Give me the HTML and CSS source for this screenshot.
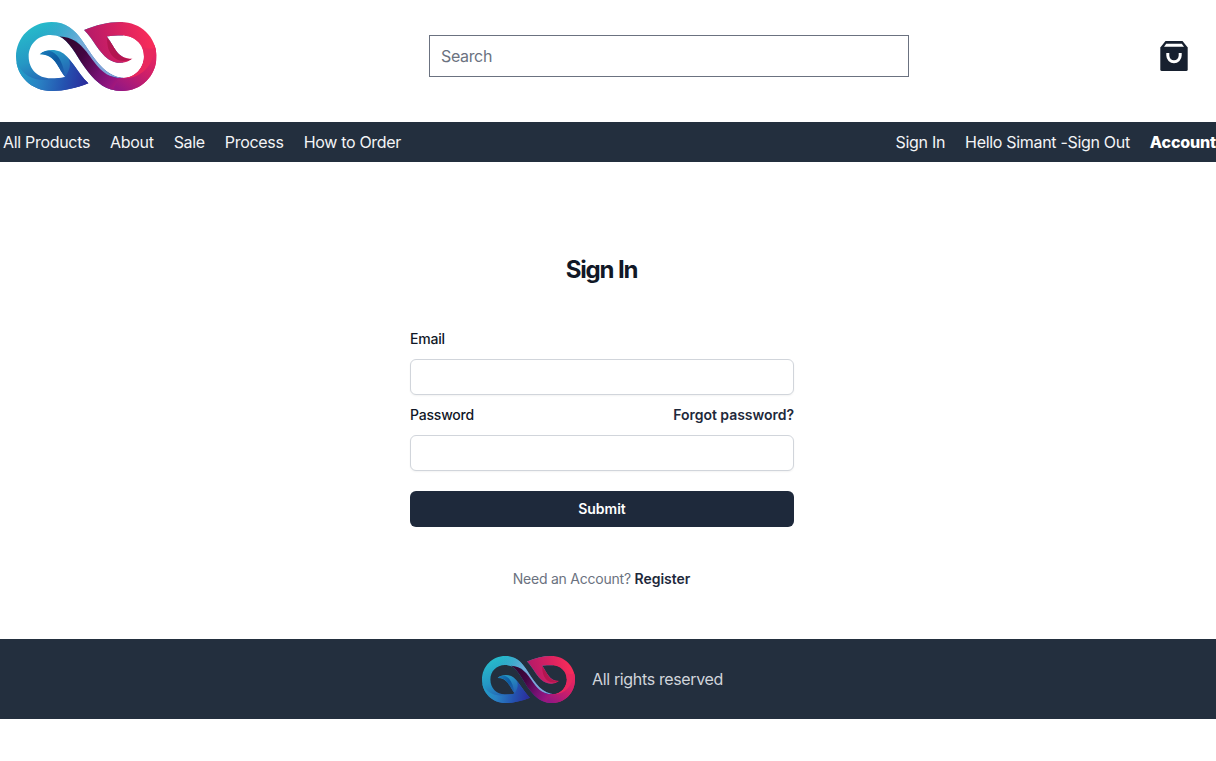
FILE: index.html
```html
<!DOCTYPE html>
<html lang="en">
<head>
<meta charset="utf-8">
<title>Sign In</title>
<link rel="stylesheet" href="styles.css">
</head>
<body>
<svg class="defs" width="0" height="0" aria-hidden="true">
  <defs>
    <linearGradient id="teal" gradientUnits="userSpaceOnUse" x1="90" y1="30" x2="170" y2="235">
      <stop offset="0" stop-color="#27bccb"/><stop offset=".45" stop-color="#2597c4"/><stop offset=".8" stop-color="#2563b4"/><stop offset="1" stop-color="#2941a6"/>
    </linearGradient>
    <linearGradient id="sky" gradientUnits="userSpaceOnUse" x1="115" y1="30" x2="240" y2="110">
      <stop offset="0" stop-color="#3ea9cf" stop-opacity="0"/><stop offset=".75" stop-color="#70aed9"/><stop offset="1" stop-color="#7fa4d8"/>
    </linearGradient>
    <linearGradient id="navy" gradientUnits="userSpaceOnUse" x1="20" y1="165" x2="235" y2="205">
      <stop offset="0" stop-color="#1fa3c8"/><stop offset=".35" stop-color="#2a83c4"/><stop offset=".7" stop-color="#2453b0"/><stop offset="1" stop-color="#2b2d9c"/>
    </linearGradient>
    <linearGradient id="leaf" gradientUnits="userSpaceOnUse" x1="95" y1="115" x2="172" y2="190">
      <stop offset="0" stop-color="#1c7fbd"/><stop offset=".5" stop-color="#0d5a9f"/><stop offset="1" stop-color="#2461b3"/>
    </linearGradient>
    <linearGradient id="band" gradientUnits="userSpaceOnUse" x1="190" y1="85" x2="420" y2="215">
      <stop offset="0" stop-color="#350632"/><stop offset=".2" stop-color="#430642"/><stop offset=".45" stop-color="#741071"/><stop offset=".62" stop-color="#941580"/><stop offset=".82" stop-color="#c51d6c"/><stop offset="1" stop-color="#e3245f"/>
    </linearGradient>
    <linearGradient id="rose" gradientUnits="userSpaceOnUse" x1="230" y1="110" x2="420" y2="60">
      <stop offset="0" stop-color="#af1969"/><stop offset=".5" stop-color="#d32063"/><stop offset="1" stop-color="#f72c59"/>
    </linearGradient>
    <linearGradient id="rim" gradientUnits="userSpaceOnUse" x1="430" y1="100" x2="340" y2="235">
      <stop offset="0" stop-color="#ed2860"/><stop offset=".5" stop-color="#cd1f69"/><stop offset="1" stop-color="#941783"/>
    </linearGradient>
    <clipPath id="knot">
      <path d="M241 212C205 226 170 235 130 235C70 235 24 190 24 133C24 75 70 29 130 29C174 29 200 52 222 84C252 127 282 183 336 195C378 200 407 168 407 130C407 94 378 69 342 69C325 69 310 69 296 72C318 98 325 139 373 139C355 153 325 156 301 140C270 118 257 82 228 53C264 38 298 29 338 29C398 29 445 74 445 132C445 190 399 235 342 235C292 235 266 209 241 179C209 140 195 100 162 76C150 70 138 68 127 68C90 68 62 96 62 132C62 170 90 197 128 197C146 197 159 196 172 193C150 170 144 125 95 125C111 111 137 109 156 117C188 131 208 181 241 212Z"/>
    </clipPath>
    <symbol id="logo" viewBox="24 29 421 206" preserveAspectRatio="none">
      <g clip-path="url(#knot)">
        <rect x="20" y="25" width="325" height="215" fill="url(#teal)"/>
        <path d="M90 68C125 20 180 20 225 55L345 200L285 185L205 85Z" fill="url(#sky)"/>
        <path d="M20 140C48 205 100 214 173 190C184 173 191 156 180 135L245 215L150 240H20Z" fill="url(#navy)"/>
        <path d="M95 125C112 108 130 112 146 128C160 143 168 168 172 195C145 168 145 124 95 125Z" fill="url(#leaf)"/>
        <path d="M155 72C204 74 228 105 257 147C282 181 307 197 342 197C380 196 407 167 407 130L450 100V240H290L235 190Z" fill="url(#band)"/>
        <path d="M205 20H450V130L407 130L373 139L340 160L285 148L232 75Z" fill="url(#rose)"/>
        <path d="M438 98C434 155 397 202 332 195L310 240H450V98Z" fill="url(#rim)"/>
        <path d="M345 66C377 90 414 117 440 106C436 165 391 202 342 196C379 196 407 168 407 130C407 96 378 66 345 66Z" fill="#e8285e"/>
        <path d="M296 72C300 84 314 91 322 110C330 130 348 139 373 139C344 153 318 143 306 120C297 104 298 90 296 72Z" fill="#b31650"/>
      </g>
    </symbol>
  </defs>
</svg>

<header class="header">
  <a class="brand" href="#" aria-label="Home"><svg class="brand-logo"><use href="#logo"/></svg></a>
  <input class="search" type="text" placeholder="Search" aria-label="Search">
  <a class="bag" href="#" aria-label="Shopping bag">
    <svg width="28" height="30" viewBox="0 0 28 30">
      <path d="M5.5 0H22.5L27.7 6.5V28.5Q27.7 30 26.2 30H1.8Q.3 30 .3 28.5V6.5Z" fill="#17202f"/>
      <path d="M6.2 2.8H21.8L24 5.8H4Z" fill="#fff"/>
      <path d="M7.8 12V14.6A6.2 6.2 0 0 0 20.2 14.6V12" fill="none" stroke="#fff" stroke-width="3"/>
    </svg>
  </a>
</header>

<nav class="nav">
  <div class="nav-group">
    <a href="#">All Products</a><a href="#">About</a><a href="#">Sale</a><a href="#">Process</a><a href="#">How to Order</a>
  </div>
  <div class="nav-group">
    <a href="#">Sign In</a><a href="#">Hello Simant -Sign Out</a><a class="account" href="#">Account</a>
  </div>
</nav>

<main class="main">
  <h1 class="title">Sign In</h1>
  <form class="form">
    <div class="label-row"><label for="email">Email</label></div>
    <input class="field" id="email" type="email">
    <div class="label-row"><label for="password">Password</label><a class="strong" href="#">Forgot password?</a></div>
    <input class="field" id="password" type="password">
    <button class="submit" type="button">Submit</button>
  </form>
  <p class="register">Need an Account? <a class="strong" href="#">Register</a></p>
</main>

<footer class="footer">
  <svg class="footer-logo"><use href="#logo"/></svg>
  <span>All rights reserved</span>
</footer>
</body>
</html>
```
FILE: styles.css
```css
* { box-sizing: border-box; }
body {
  margin: 0;
  background: #fff;
  color: #111827;
  font: 16px/24px Inter, "Liberation Sans", sans-serif;
  overflow-x: hidden;
}
a { color: inherit; text-decoration: none; }
input, button { font: inherit; letter-spacing: inherit; }
.defs { display: block; height: 0; }
.header {
  display: flex;
  justify-content: space-between;
  height: 122px;
  padding: 0 28px 0 16px;
}
.brand { width: 141px; padding-top: 22px; }
.brand-logo { display: block; width: 140.5px; height: 69px; }
.search {
  width: 480px;
  height: 42px;
  margin: 35px 0 0 21px;
  padding: 8px 11px;
  border: 1px solid #6b7280;
  border-radius: 0;
  background: #fff;
  letter-spacing: -0.35px;
}
.search::placeholder { color: #6b7280; opacity: 1; }
.bag { padding-top: 41px; }
.bag svg { display: block; }
.nav {
  display: flex;
  justify-content: space-between;
  align-items: center;
  height: 40px;
  padding-left: 3px;
  background: #232f3e;
  color: #f3f4f6;
  letter-spacing: -0.31px;
}
.nav-group { display: flex; gap: 20px; white-space: nowrap; }
.account { color: #fff; font-weight: 800; letter-spacing: -0.15px; }
.main {
  display: flex;
  flex-direction: column;
  align-items: center;
  height: 477px;
  padding: 92px 13px 0 0;
}
.title {
  margin: 0;
  font-size: 24px;
  line-height: 32px;
  font-weight: 700;
  letter-spacing: -1.15px;
}
.form {
  display: flex;
  flex-direction: column;
  width: 384px;
  margin-top: 41px;
  margin-left: 1px;
  font-size: 14px;
  letter-spacing: 0;
}
.label-row {
  display: flex;
  justify-content: space-between;
  height: 24px;
  margin-bottom: 8px;
  font-weight: 500;
  letter-spacing: -0.2px;
}
.strong { color: #1e293b; font-weight: 600; letter-spacing: -0.03px; }
.field {
  width: 100%;
  height: 36px;
  margin-bottom: 8px;
  padding: 6px 12px;
  border: 1px solid #d1d5db;
  border-radius: 6px;
  background: #fff;
  box-shadow: 0 1px 2px rgba(0, 0, 0, .05);
}
.submit {
  height: 36px;
  margin-top: 12px;
  padding: 0;
  border: 0;
  border-radius: 6px;
  background: #1e293b;
  color: #fff;
  font-weight: 600;
}
.register {
  margin: 40px 0 0;
  color: #6b7280;
  font-size: 14px;
  letter-spacing: -0.23px;
}
.footer {
  display: flex;
  align-items: center;
  gap: 17px;
  height: 80px;
  padding-left: 482px;
  background: #232f3e;
  color: #d1d5db;
  letter-spacing: -0.35px;
}
.footer-logo { width: 93px; height: 47px; filter: blur(.7px); }
```
